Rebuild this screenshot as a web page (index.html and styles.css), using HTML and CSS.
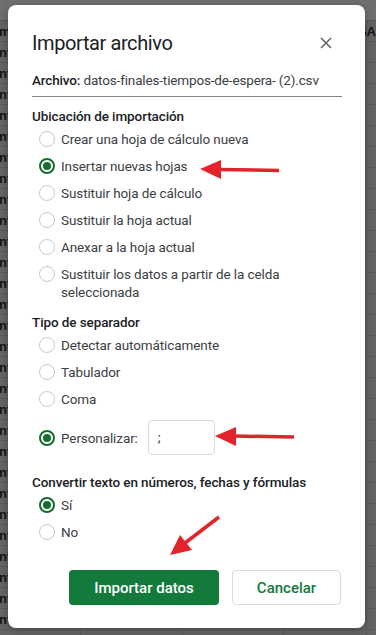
FILE: index.html
```html
<!DOCTYPE html>
<html lang="es">
<head>
    <meta charset="UTF-8">
    <meta name="viewport" content="width=device-width, initial-scale=1.0">
    <title>Importar archivo</title>
    <link rel="stylesheet" href="styles.css">
</head>
<body>

    <!-- Dimmed spreadsheet behind the dialog -->
    <div class="sheet">
        <div class="sheet-head"></div>
        <div class="sheet-row"><span class="cell-a">m</span><span class="cell-z">SA</span></div>
        <div class="sheet-row"><span class="cell-a">nt</span></div>
        <div class="sheet-row"><span class="cell-a">nt</span></div>
        <div class="sheet-row"><span class="cell-a">nt</span></div>
        <div class="sheet-row"><span class="cell-a">nt</span></div>
        <div class="sheet-row"><span class="cell-a">nt</span></div>
        <div class="sheet-row"><span class="cell-a">nt</span></div>
        <div class="sheet-row"><span class="cell-a">nt</span></div>
        <div class="sheet-row"><span class="cell-a">nt</span></div>
        <div class="sheet-row"><span class="cell-a">nt</span></div>
        <div class="sheet-row"><span class="cell-a">nt</span></div>
        <div class="sheet-row"><span class="cell-a">nt</span></div>
        <div class="sheet-row"><span class="cell-a">nt</span></div>
        <div class="sheet-row"><span class="cell-a">nt</span></div>
        <div class="sheet-row"><span class="cell-a">nt</span></div>
        <div class="sheet-row"><span class="cell-a">nt</span></div>
        <div class="sheet-row"><span class="cell-a">nt</span></div>
        <div class="sheet-row"><span class="cell-a">nt</span></div>
        <div class="sheet-row"><span class="cell-a">nt</span></div>
        <div class="sheet-row"><span class="cell-a">nt</span></div>
        <div class="sheet-row"><span class="cell-a">nt</span></div>
        <div class="sheet-row"><span class="cell-a">nt</span></div>
        <div class="sheet-row"><span class="cell-a">nt</span></div>
        <div class="sheet-row"><span class="cell-a">nt</span></div>
        <div class="sheet-row"><span class="cell-a">nt</span></div>
        <div class="sheet-row"><span class="cell-a">nt</span></div>
        <div class="sheet-row"><span class="cell-a">nt</span></div>
        <div class="sheet-row"><span class="cell-a">nt</span></div>
        <div class="sheet-row"><span class="cell-a">nt</span></div>
        <div class="sheet-row"></div>
    </div>

    <div class="dialog">
        <div class="dialog-head">
            <h1>Importar archivo</h1>
            <svg class="close" width="12" height="12" viewBox="0 0 12 12">
                <path d="M1 1 L11 11 M11 1 L1 11" stroke="#5f6368" stroke-width="1.5" fill="none"/>
            </svg>
        </div>

        <div class="file"><b>Archivo:</b> datos-finales-tiempos-de-espera- (2).csv</div>

        <div class="section-title first">Ubicación de importación</div>
        <div class="option"><span class="radio"></span><span>Crear una hoja de cálculo nueva</span></div>
        <div class="option"><span class="radio checked"></span><span>Insertar nuevas hojas</span></div>
        <div class="option"><span class="radio"></span><span>Sustituir hoja de cálculo</span></div>
        <div class="option"><span class="radio"></span><span>Sustituir la hoja actual</span></div>
        <div class="option"><span class="radio"></span><span>Anexar a la hoja actual</span></div>
        <div class="option"><span class="radio"></span><span>Sustituir los datos a partir de la celda<br>seleccionada</span></div>

        <div class="section-title">Tipo de separador</div>
        <div class="option"><span class="radio"></span><span>Detectar automáticamente</span></div>
        <div class="option"><span class="radio"></span><span>Tabulador</span></div>
        <div class="option"><span class="radio"></span><span>Coma</span></div>
        <div class="option custom">
            <span class="radio checked"></span><span>Personalizar:</span>
            <span class="sep-input">;</span>
        </div>

        <div class="section-title last">Convertir texto en números, fechas y fórmulas</div>
        <div class="option"><span class="radio checked"></span><span>Sí</span></div>
        <div class="option"><span class="radio"></span><span>No</span></div>

        <div class="actions">
            <button type="button" class="btn-primary">Importar datos</button>
            <button type="button" class="btn-secondary">Cancelar</button>
        </div>
    </div>

    <!-- Red annotation arrows -->
    <svg class="arrows" width="376" height="635" viewBox="0 0 376 635">
        <g fill="#e3232b" stroke="#e3232b">
            <line x1="218" y1="169.5" x2="279" y2="170.5" stroke-width="3.5"/>
            <polygon points="200,169 221,160 221,179" stroke="none"/>

            <line x1="233" y1="436" x2="294" y2="437" stroke-width="3.5"/>
            <polygon points="215,436 236,427 236,446" stroke="none"/>

            <line x1="219" y1="517" x2="185" y2="543" stroke-width="3.5"/>
            <polygon points="170,555 180,535 192,550" stroke="none"/>
        </g>
    </svg>

</body>
</html>
```

FILE: styles.css
```css
body {
    margin: 0;
    width: 376px;
    height: 635px;
    overflow: hidden;
    position: relative;
    background-color: #646464;
    font-family: Roboto, "Liberation Sans", Arial, sans-serif;
}

/* Spreadsheet under the modal overlay */
.sheet {
    height: 635px;
    background-image:
        linear-gradient(#585858, #585858),
        linear-gradient(#585858, #585858),
        linear-gradient(#585858, #585858),
        linear-gradient(#585858, #585858);
    background-size: 1px 100%;
    background-position: 80px 0, 182px 0, 283px 0, 366px 0;
    background-repeat: no-repeat;
}

.sheet-head {
    height: 21px;
    background-color: #6f6f6f;
    border-bottom: 1px solid #565656;
    box-sizing: border-box;
}

.sheet-row {
    height: 21px;
    box-sizing: border-box;
    border-bottom: 1px solid #5a5a5a;
    display: flex;
    justify-content: space-between;
    align-items: center;
    font-family: "Liberation Sans", Arial, sans-serif;
    font-size: 13px;
    font-weight: bold;
    color: #151515;
}

.cell-a {
    margin-left: -1px;
}

.cell-z {
    margin-right: 0;
}

/* Dialog */
.dialog {
    position: absolute;
    left: 8px;
    top: 5px;
    width: 357px;
    height: 623px;
    box-sizing: border-box;
    padding: 24px 23px 23px 24px;
    background: #fff;
    border-radius: 8px;
    box-shadow: 0 2px 8px rgba(0, 0, 0, 0.25);
    display: flex;
    flex-direction: column;
    color: #3c4043;
}

.dialog-head {
    display: flex;
    justify-content: space-between;
    align-items: center;
    height: 28px;
}

.dialog-head h1 {
    margin: 0;
    font-size: 20px;
    font-weight: 400;
    letter-spacing: -0.4px;
    line-height: 28px;
    color: #202124;
}

.close {
    margin-right: 10px;
}

.file {
    margin-top: 13px;
    padding-bottom: 6px;
    border-bottom: 1px solid #80868b;
    font-size: 13.5px;
    letter-spacing: -0.15px;
    line-height: 20px;
    color: #3c4043;
    white-space: nowrap;
}

.file b {
    font-weight: 500;
    color: #202124;
}

.section-title {
    margin-top: 8px;
    font-size: 13.5px;
    letter-spacing: -0.1px;
    font-weight: 500;
    line-height: 18px;
    color: #202124;
}

.section-title.first {
    margin-top: 10px;
}

.section-title.last {
    margin-top: 14px;
}

.option {
    display: flex;
    align-items: flex-start;
    padding: 4.5px 0 4.5px 7px;
    font-size: 13.5px;
    letter-spacing: -0.1px;
    line-height: 18px;
    color: #3c4043;
}

.option.custom {
    align-items: center;
    padding: 8px 0 4px 7px;
}

.radio {
    flex: none;
    width: 16px;
    height: 16px;
    margin: 1px 6px 0 0;
    box-sizing: border-box;
    border: 1px solid #c6c8cb;
    border-radius: 50%;
    position: relative;
}

.option.custom .radio {
    margin-top: 0;
}

.radio.checked {
    border: 2px solid #146c2e;
}

.radio.checked:after {
    content: '';
    position: absolute;
    left: 2px;
    top: 2px;
    width: 8px;
    height: 8px;
    border-radius: 50%;
    background: #146c2e;
}

.sep-input {
    margin-left: 10px;
    width: 67px;
    height: 35px;
    box-sizing: border-box;
    padding-left: 9px;
    border: 1px solid #dadce0;
    border-radius: 4px;
    line-height: 33px;
    color: #202124;
}

.actions {
    margin-top: auto;
    margin-right: 1px;
    display: flex;
    justify-content: flex-end;
    gap: 13px;
}

.actions button {
    height: 35px;
    border-radius: 4px;
    font-family: Roboto, "Liberation Sans", Arial, sans-serif;
    font-size: 15px;
    font-weight: 500;
    cursor: pointer;
}

.btn-primary {
    width: 150px;
    border: none;
    background-color: #137a3b;
    color: #fff;
}

.btn-secondary {
    width: 109px;
    border: 1px solid #dadce0;
    background-color: #fff;
    color: #137a3b;
}

.arrows {
    position: absolute;
    left: 0;
    top: 0;
    pointer-events: none;
}
```
